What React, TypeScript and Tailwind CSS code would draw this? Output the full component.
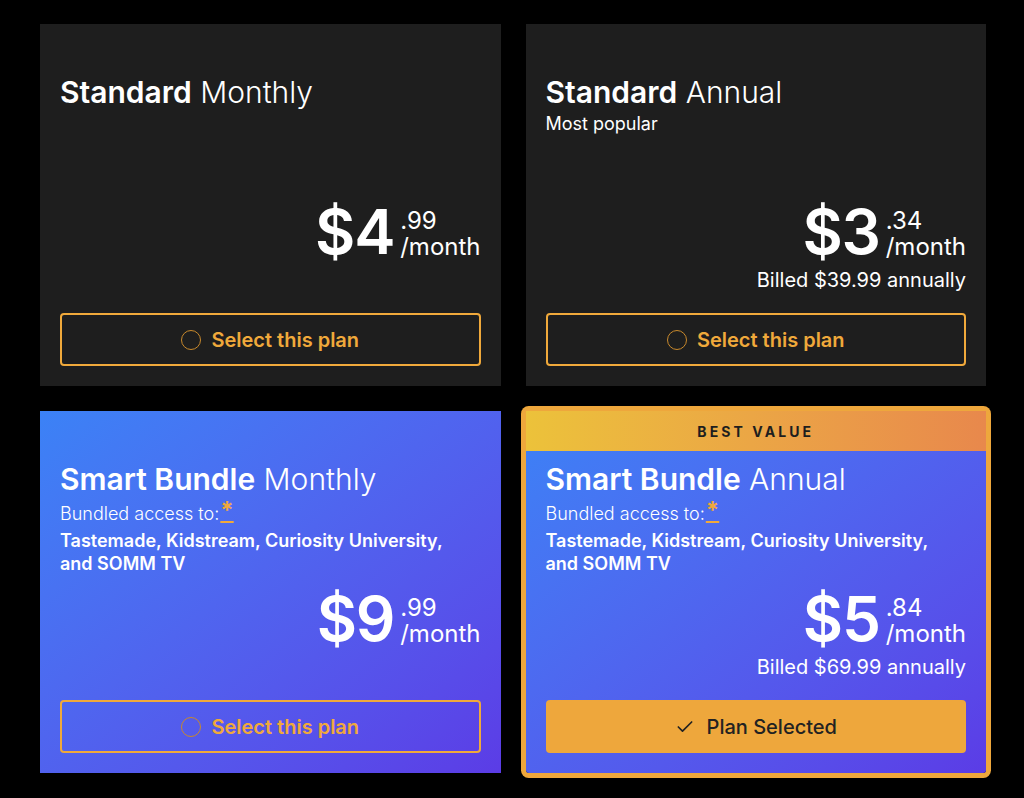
import { Check } from "lucide-react";

type Plan = {
  name: string;
  term: string;
  subtitle?: string;
  bundle?: boolean;
  dollars: string;
  cents: string;
  billed?: string;
  selected?: boolean;
};

const plans: Plan[] = [
  { name: "Standard", term: "Monthly", dollars: "4", cents: ".99" },
  {
    name: "Standard",
    term: "Annual",
    subtitle: "Most popular",
    dollars: "3",
    cents: ".34",
    billed: "Billed $39.99 annually",
  },
  { name: "Smart Bundle", term: "Monthly", bundle: true, dollars: "9", cents: ".99" },
  {
    name: "Smart Bundle",
    term: "Annual",
    bundle: true,
    dollars: "5",
    cents: ".84",
    billed: "Billed $69.99 annually",
    selected: true,
  },
];

function PlanCard({ plan }: { plan: Plan }) {
  const bg = plan.bundle
    ? "bg-gradient-to-br from-[#3b82f6] to-[#5b3ce6]"
    : "bg-[#1e1e1e]";

  return (
    <div
      className={`flex h-[362px] flex-col text-white ${bg} ${
        plan.selected ? "rounded-[3px] ring-[5px] ring-[#eea73c]" : ""
      }`}
    >
      {/* Badge strip (empty space on the other cards) */}
      {plan.selected ? (
        <div className="flex h-10 items-center justify-center bg-gradient-to-r from-[#ecc23a] to-[#e8884c] text-[14px] font-bold tracking-[0.22em] text-[#1e1e1e]">
          BEST VALUE
        </div>
      ) : (
        <div className="h-10" />
      )}

      <div className="h-[139px] px-5 pt-[10px]">
        <h2 className="text-[30px] leading-[36px]">
          <span className="font-semibold">{plan.name}</span>{" "}
          <span className="font-light">{plan.term}</span>
        </h2>
        {plan.subtitle && (
          <p className="mt-[3px] text-[18px] leading-[22px]">{plan.subtitle}</p>
        )}
        {plan.bundle && (
          <>
            <p className="mt-[5px] text-[18px] font-light leading-[24px]">
              Bundled access to:
              <span className="ml-[1px] inline-block align-top text-[24px] font-bold leading-[18px] text-[#f0a93b] underline">
                *
              </span>
            </p>
            <p className="mt-[3px] max-w-[400px] text-[18px] font-semibold leading-[23px]">
              Tastemade, Kidstream, Curiosity University,
              <br />
              and SOMM TV
            </p>
          </>
        )}
      </div>

      <div className="flex items-end justify-end px-5">
        <span className="text-[62px] font-semibold leading-[58px] tracking-[-0.02em]">
          ${plan.dollars}
        </span>
        <div className="ml-[6px] flex flex-col pb-[1px] text-[24px] leading-[26px]">
          <span>{plan.cents}</span>
          <span>/month</span>
        </div>
      </div>

      <div className="mt-[7px] h-6 px-5 text-right text-[20px] leading-[24px]">
        {plan.billed}
      </div>

      <div className="mt-auto px-5 pb-5">
        {plan.selected ? (
          <button className="flex h-[53px] w-full items-center justify-center gap-3 rounded-[4px] bg-[#eea73c] text-[20px] font-medium text-[#222]">
            <Check size={20} strokeWidth={2} />
            Plan Selected
          </button>
        ) : (
          <button className="flex h-[53px] w-full items-center justify-center gap-[10px] rounded-[4px] border-2 border-[#f0a93b] text-[20px] font-semibold text-[#f0a93b]">
            <span className="h-5 w-5 rounded-full border-[1.5px] border-[#c8892c]" />
            Select this plan
          </button>
        )}
      </div>
    </div>
  );
}

export default function App() {
  return (
    <div
      className="min-h-screen bg-black pt-6"
      style={{ fontFamily: "Inter, 'Noto Sans', sans-serif" }}
    >
      <div className="ml-10 grid w-[946px] grid-cols-2 gap-[25px]">
        {plans.map((p, i) => (
          <PlanCard key={i} plan={p} />
        ))}
      </div>
    </div>
  );
}
